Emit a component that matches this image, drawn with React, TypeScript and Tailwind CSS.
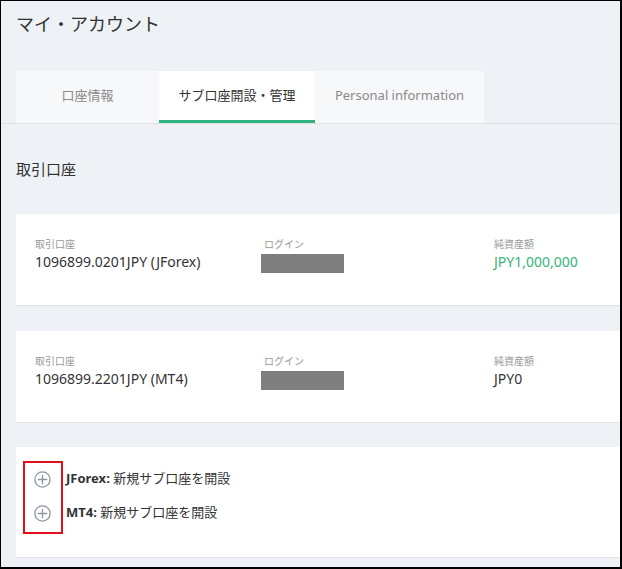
const font = { fontFamily: '"Noto Sans", "Noto Sans CJK JP", sans-serif' };

function PlusCircle() {
  return (
    <svg width="17" height="17" viewBox="0 0 17 17" fill="none" stroke="#8d96a1" strokeWidth="1.3">
      <circle cx="8.5" cy="8.5" r="7.6" />
      <path d="M8.5 4.3v8.4M4.3 8.5h8.4" strokeLinecap="round" />
    </svg>
  );
}

type Account = { id: string; value: string; green?: boolean };

const accounts: Account[] = [
  { id: "1096899.0201JPY (JForex)", value: "JPY1,000,000", green: true },
  { id: "1096899.2201JPY (MT4)", value: "JPY0" },
];

function AccountCard({ a }: { a: Account }) {
  return (
    <div className="bg-white border-b border-[#e2e6eb] pl-[19px] pt-[22px] pb-[32px] flex">
      <div className="w-[226px] flex flex-col">
        <span className="text-[10px] leading-4 text-[#9a9a9a]">取引口座</span>
        <span className="text-[14px] leading-5 text-[#333]">{a.id}</span>
      </div>
      <div className="w-[233px] flex flex-col">
        <span className="text-[10px] leading-4 text-[#9a9a9a] pl-[3px]">ログイン</span>
        <div className="mt-[2px] w-[83px] h-[19px] bg-[#7f7f7f]" />
      </div>
      <div className="flex flex-col">
        <span className="text-[10px] leading-4 text-[#9a9a9a]">純資産額</span>
        <span className={`text-[14px] leading-5 ${a.green ? "text-[#35b47c]" : "text-[#333]"}`}>{a.value}</span>
      </div>
    </div>
  );
}

export default function App() {
  const tabs = [
    { label: "口座情報", w: "w-[143px]" },
    { label: "サブ口座開設・管理", w: "w-[156px]", active: true },
    { label: "Personal information", w: "w-[169px]" },
  ];
  return (
    <div
      style={font}
      className="w-[622px] h-[569px] box-border border-l border-t border-r-2 border-b-2 border-black bg-[#eef1f5] overflow-hidden"
    >
      <div className="pl-[15px] pt-[9px]">
        <h1 className="text-[18px] leading-7 text-[#333]">マイ・アカウント</h1>
      </div>

      <div className="mt-[33px] pl-[15px] border-b border-[#dde1e6]">
        <div className="flex">
          {tabs.map((t) => (
            <div
              key={t.label}
              className={`${t.w} h-[52px] flex items-center justify-center text-[13px] border-b-[3px] ${
                t.active
                  ? "bg-white text-[#333] border-[#2fb37c]"
                  : "bg-[#f7f8fa] text-[#8a8a8a] border-transparent"
              }`}
            >
              {t.label}
            </div>
          ))}
        </div>
      </div>

      <div className="pl-[15px]">
        <h2 className="mt-[34px] text-[15px] leading-[22px] text-[#333]">取引口座</h2>

        <div className="mt-[34px] flex flex-col gap-[24px]">
          {accounts.map((a, i) => (
            <div key={a.id} className={i === 0 ? "mb-[1px]" : ""}>
              <AccountCard a={a} />
            </div>
          ))}

          <div className="relative bg-white border-b border-[#e2e6eb] pl-[18px] pt-[22px] pb-[34px] flex flex-col gap-[14px]">
            {[
              { b: "JForex:", t: " 新規サブ口座を開設" },
              { b: "MT4:", t: " 新規サブ口座を開設" },
            ].map((r) => (
              <div key={r.b} className="flex items-center gap-[15px] h-5">
                <PlusCircle />
                <span className="text-[13px] text-[#333]">
                  <b className="font-bold">{r.b}</b>
                  {r.t}
                </span>
              </div>
            ))}
            <div className="absolute left-[7px] top-[14px] w-[40px] h-[73px] border-2 border-[#e3101b]" />
          </div>
        </div>
      </div>
    </div>
  );
}
